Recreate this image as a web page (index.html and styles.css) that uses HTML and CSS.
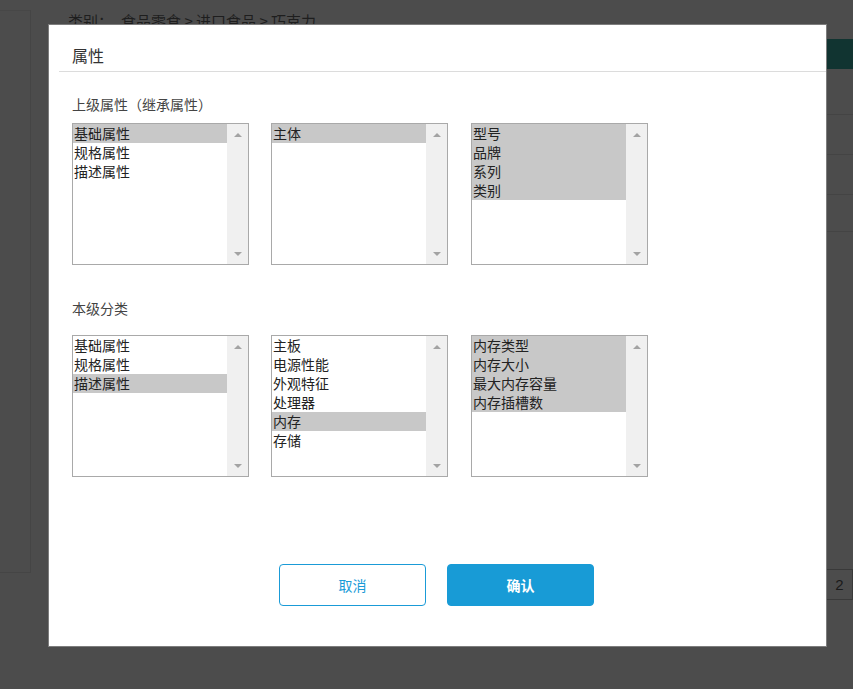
FILE: index.html
```html
<!DOCTYPE html>
<html lang="zh-CN">
<head>
<meta charset="utf-8">
<title>属性</title>
<link rel="stylesheet" href="styles.css">
</head>
<body>
<div class="page">
  <div class="sidebar"></div>
  <div class="main">
    <div class="crumb"><span class="crumb-label">类别：</span>食品零食 &gt; 进口食品 &gt; 巧克力</div>
  </div>
  <div class="right">
    <div class="teal"></div>
    <div class="rrow r1"></div>
    <div class="rrow r2"></div>
    <div class="rrow r3"></div>
    <div class="rrow r4"></div>
    <div class="pager">2</div>
  </div>

  <div class="modal">
    <div class="modal-head">属性</div>
    <div class="modal-body">
      <div class="section-label first">上级属性（继承属性）</div>
      <div class="lists">
        <div class="list">
          <div class="opts">
            <div class="opt sel">基础属性</div>
            <div class="opt">规格属性</div>
            <div class="opt">描述属性</div>
          </div>
          <div class="sb"><span class="up"></span><span class="down"></span></div>
        </div>
        <div class="list">
          <div class="opts">
            <div class="opt sel">主体</div>
          </div>
          <div class="sb"><span class="up"></span><span class="down"></span></div>
        </div>
        <div class="list">
          <div class="opts">
            <div class="opt sel">型号</div>
            <div class="opt sel">品牌</div>
            <div class="opt sel">系列</div>
            <div class="opt sel">类别</div>
          </div>
          <div class="sb"><span class="up"></span><span class="down"></span></div>
        </div>
      </div>

      <div class="section-label second">本级分类</div>
      <div class="lists">
        <div class="list">
          <div class="opts">
            <div class="opt">基础属性</div>
            <div class="opt">规格属性</div>
            <div class="opt sel">描述属性</div>
          </div>
          <div class="sb"><span class="up"></span><span class="down"></span></div>
        </div>
        <div class="list">
          <div class="opts">
            <div class="opt">主板</div>
            <div class="opt">电源性能</div>
            <div class="opt">外观特征</div>
            <div class="opt">处理器</div>
            <div class="opt sel">内存</div>
            <div class="opt">存储</div>
          </div>
          <div class="sb"><span class="up"></span><span class="down"></span></div>
        </div>
        <div class="list">
          <div class="opts">
            <div class="opt sel">内存类型</div>
            <div class="opt sel">内存大小</div>
            <div class="opt sel">最大内存容量</div>
            <div class="opt sel">内存插槽数</div>
          </div>
          <div class="sb"><span class="up"></span><span class="down"></span></div>
        </div>
      </div>

      <div class="actions">
        <button class="btn cancel">取消</button>
        <button class="btn ok">确认</button>
      </div>
    </div>
  </div>
</div>
</body>
</html>
```

FILE: styles.css
```css
* { box-sizing: border-box; }
html, body { margin: 0; padding: 0; }
body {
  width: 853px;
  height: 689px;
  overflow: hidden;
  background: #4c4c4c;
  font-family: "Noto Sans CJK SC", "Microsoft YaHei", "Liberation Sans", sans-serif;
}
.page {
  position: relative;
  display: flex;
  width: 853px;
  height: 689px;
}
.sidebar {
  width: 31px;
  height: 563px;
  margin-top: 10px;
  border-top: 1px solid #474747;
  border-right: 1px solid #454545;
  border-bottom: 1px solid #454545;
}
.main {
  flex: 1;
  padding-left: 37px;
  padding-top: 11px;
}
.crumb {
  font-size: 15px;
  line-height: 20px;
  color: #1e1e1e;
}
.crumb-label { margin-right: 8px; }
.right {
  width: 27px;
  display: flex;
  flex-direction: column;
  padding-top: 39px;
}
.teal { height: 30px; background: #113431; }
.rrow { border-bottom: 1px solid #444; }
.r1 { height: 46px; }
.r2 { height: 40px; }
.r3 { height: 40px; }
.r4 { height: 37px; }
.pager {
  margin-top: 337px;
  width: 27px;
  height: 31px;
  border: 1px solid #393939;
  font-size: 15px;
  line-height: 29px;
  text-align: center;
  color: #1a1a1a;
  font-family: "Liberation Sans", sans-serif;
}

.modal {
  position: absolute;
  left: 48px;
  top: 24px;
  width: 779px;
  height: 623px;
  background: #fff;
  border: 1px solid #7d7d7d;
}
.modal-head {
  height: 47px;
  margin-left: 10px;
  padding-left: 13px;
  padding-top: 20px;
  font-size: 16px;
  line-height: 20px;
  color: #333;
  border-bottom: 1px solid #dcdcdc;
}
.modal-body {
  padding-left: 23px;
}
.section-label {
  font-size: 14px;
  line-height: 20px;
  color: #444;
}
.section-label.first { margin-top: 22px; margin-bottom: 9px; }
.section-label.second { margin-top: 33px; margin-bottom: 17px; }
.lists {
  display: flex;
  gap: 22px;
}
.list {
  display: flex;
  width: 177px;
  height: 142px;
  border: 1px solid #a9a9a9;
  background: #fff;
}
.list:last-child { margin-left: 1px; }
.opts { flex: 1; }
.opt {
  height: 19px;
  line-height: 19px;
  padding-left: 1px;
  font-size: 14px;
  color: #222;
  white-space: nowrap;
}
.opt.sel { background: #c8c8c8; }
.sb {
  width: 21px;
  background: #f0f0f0;
  display: flex;
  flex-direction: column;
  justify-content: space-between;
  align-items: center;
  padding: 9px 0 8px;
}
.up {
  width: 0; height: 0;
  border-left: 4px solid transparent;
  border-right: 4px solid transparent;
  border-bottom: 4px solid #a3a3a3;
}
.down {
  width: 0; height: 0;
  border-left: 4px solid transparent;
  border-right: 4px solid transparent;
  border-top: 4px solid #a3a3a3;
}
.actions {
  display: flex;
  justify-content: center;
  gap: 21px;
  margin-top: 87px;
  padding-right: 25px;
}
.btn {
  width: 147px;
  height: 42px;
  border-radius: 4px;
  font-family: inherit;
  font-size: 14px;
  padding: 0;
}
.cancel {
  background: #fff;
  border: 1px solid #1a9bd7;
  color: #1a9bd7;
}
.ok {
  background: #189bd6;
  border: 1px solid #189bd6;
  color: #fff;
  font-weight: bold;
}
```
